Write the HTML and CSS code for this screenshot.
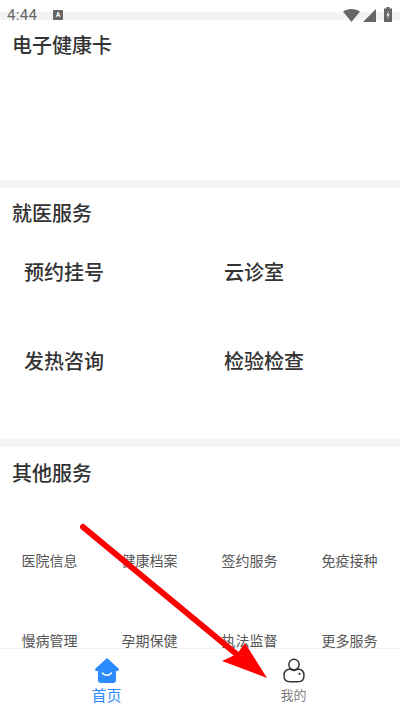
FILE: index.html
```html
<!DOCTYPE html>
<html lang="zh-CN">
<head>
    <meta charset="UTF-8">
    <meta name="viewport" content="width=device-width, initial-scale=1.0">
    <title>健康服务</title>
    <link rel="stylesheet" href="styles.css">
</head>
<body>
    <div class="phone">
        <div class="status-bar">
            <span class="status-time">4:44</span>
            <span class="status-badge">A</span>
            <div class="status-icons">
                <svg class="status-wifi" width="17" height="13" viewBox="0 0 17 13"><path d="M0 2.500C2.300 .9 5.200 0 8.500 0S14.700 .9 17 2.500L8.500 13z" fill="#666"/></svg>
                <svg class="status-signal" width="13" height="13" viewBox="0 0 13 13"><path d="M13 0v13H0z" fill="#666"/></svg>
                <svg class="status-battery" width="8" height="15" viewBox="0 0 8 15"><path d="M2.500 0h3v1.500H8V15H0V1.500h2.500z" fill="#666"/><path d="M4.800 3.500 2.500 8.500h1.500l-.8 4L5.600 7.300H4.100z" fill="#fff"/></svg>
            </div>
        </div>

        <div class="content">
            <section class="card card-health">
                <h2 class="card-title">电子健康卡</h2>
            </section>
            <section class="card card-visit">
                <h2 class="card-title">就医服务</h2>
                <div class="visit-grid">
                    <div class="visit-item">预约挂号</div>
                    <div class="visit-item">云诊室</div>
                    <div class="visit-item">发热咨询</div>
                    <div class="visit-item">检验检查</div>
                </div>
            </section>
            <section class="card card-other">
                <h2 class="card-title">其他服务</h2>
                <div class="other-grid">
                    <div class="other-item">医院信息</div>
                    <div class="other-item">健康档案</div>
                    <div class="other-item">签约服务</div>
                    <div class="other-item">免疫接种</div>
                    <div class="other-item">慢病管理</div>
                    <div class="other-item">孕期保健</div>
                    <div class="other-item">执法监督</div>
                    <div class="other-item">更多服务</div>
                </div>
            </section>
        </div>

        <nav class="tab-bar">
            <div class="tab tab-active">
                <svg width="24" height="25" viewBox="0 0 24 25"><path d="M12 0 23.500 10.500c.8 .9 .2 2.500-1 2.500H21v9c0 1.800-1 3-3 3H6c-2 0-3-1.200-3-3v-9H1.500c-1.200 0-1.800-1.600-1-2.500z" fill="#2c8cff"/><path d="M7.500 15c2.500 3 6.500 3 9 0" fill="none" stroke="#fff" stroke-width="1.500" stroke-linecap="round"/></svg>
                <span class="tab-label">首页</span>
            </div>
            <div class="tab">
                <svg width="22" height="25" viewBox="0 0 22 25"><circle cx="11" cy="6.500" r="5.200" fill="none" stroke="#333" stroke-width="1.400"/><path d="M7 11C3.500 11.300 1 13.500 1 17.500 1 21.500 3.500 23.800 7 23.800h8c3.500 0 6-2.300 6-6.300 0-4-2.500-6.200-6-6.500-2.500 2-5.500 2-8 0z" fill="none" stroke="#333" stroke-width="1.400" stroke-linejoin="round"/><circle cx="16.500" cy="15.800" r="1.100" fill="#333"/></svg>
                <span class="tab-label">我的</span>
            </div>
        </nav>

        <svg class="arrow" width="400" height="712" viewBox="0 0 400 712">
            <path d="M83 527 240 657" stroke="#f00" stroke-width="6" stroke-linecap="round"/>
            <path d="M267 678 222 661 237 654 245 643z" fill="#f00"/>
        </svg>
    </div>
</body>
</html>
```

FILE: styles.css
```css
* {
    margin: 0;
    padding: 0;
    box-sizing: border-box;
}

body {
    font-family: Roboto, "Noto Sans CJK SC", sans-serif;
    background: #fff;
}

.phone {
    position: relative;
    display: flex;
    flex-direction: column;
    width: 400px;
    height: 712px;
    overflow: hidden;
    background: #fff;
}

.status-bar {
    display: flex;
    align-items: center;
    height: 21px;
    padding: 8px 8px 0 7px;
    flex-shrink: 0;
    background: linear-gradient(#fff 12px, #f3f3f3 12px, #f3f3f3 20px, #fff 20px);
}

.status-time {
    font-size: 15px;
    line-height: 14px;
    color: #666;
    letter-spacing: .3px;
}

.status-badge {
    width: 10px;
    height: 10px;
    margin-left: 16px;
    font-size: 7px;
    line-height: 10px;
    font-weight: 700;
    text-align: center;
    color: #fff;
    background: #666;
    border-radius: 1px;
}

.status-icons {
    display: flex;
    align-items: flex-end;
    height: 15px;
    margin-left: auto;
}

.status-signal {
    margin-left: 3px;
}

.status-battery {
    margin-left: 8px;
}

.content {
    flex: 1;
    min-height: 0;
    overflow: hidden;
}

.card {
    border-bottom: 8px solid #f4f4f4;
    padding: 0 12px;
}

.card-health {
    height: 167px;
    padding-top: 11px;
}

.card-visit {
    height: 259px;
    padding-top: 12px;
}

.card-title {
    font-size: 20px;
    line-height: 28px;
    font-weight: 500;
    color: #333;
}

.visit-grid {
    display: grid;
    grid-template-columns: 200px 1fr;
    grid-auto-rows: 89px;
    margin-top: 22px;
    padding-left: 12px;
}

.visit-item {
    padding-top: 9px;
    font-size: 20px;
    line-height: 28px;
    font-weight: 500;
    color: #333;
}

.card-other {
    padding-top: 13px;
    border-bottom: none;
}

.other-grid {
    display: grid;
    grid-template-columns: repeat(4, 100px);
    grid-auto-rows: 80px;
    margin: 63px -12px 0 -12.500px;
}

.other-item {
    font-size: 14px;
    line-height: 20px;
    text-align: center;
    color: #555;
}

.tab-bar {
    display: flex;
    height: 64px;
    padding: 0 13px;
    flex-shrink: 0;
    background: #fff;
    border-top: 1px solid #f0f0f0;
}

.tab {
    flex: 1;
    display: flex;
    flex-direction: column;
    align-items: center;
    padding-top: 9px;
}

.tab-label {
    margin-top: 4px;
    font-size: 13px;
    line-height: 18px;
    color: #808080;
}

.tab-active .tab-label {
    font-size: 15px;
    color: #2c8cff;
}

.arrow {
    position: absolute;
    left: 0;
    top: 0;
    pointer-events: none;
}
```
